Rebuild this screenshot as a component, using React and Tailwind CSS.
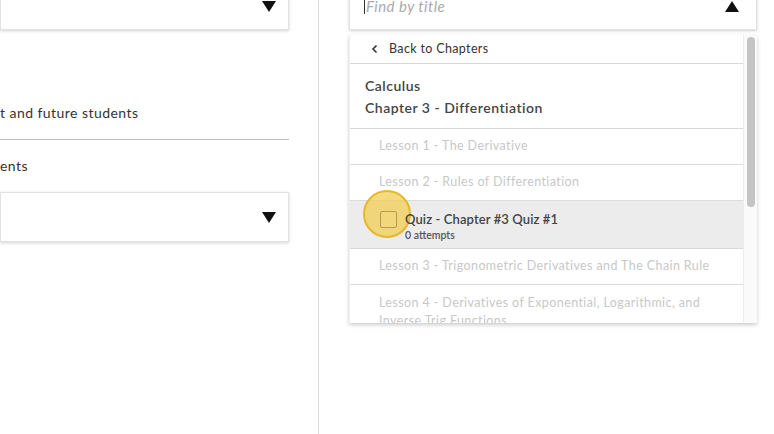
import React from "react";

const lessons = {
  before: ["Lesson 1 - The Derivative", "Lesson 2 - Rules of Differentiation"],
  after: ["Lesson 3 - Trigonometric Derivatives and The Chain Rule"],
};

function Triangle({ up }) {
  return (
    <svg width="14" height="11" viewBox="0 0 14 11" className="shrink-0">
      {up ? <path d="M0 11 L7 0 L14 11 Z" fill="#111" /> : <path d="M0 0 L14 0 L7 11 Z" fill="#111" />}
    </svg>
  );
}

function LessonRow({ title }) {
  return (
    <div className="h-[36px] shrink-0 flex items-center pl-[29px] border-b border-[#dcdcdc] text-[12.5px] tracking-[0.4px] text-[#c8c8c8]">
      {title}
    </div>
  );
}

export default function App() {
  return (
    <div
      className="w-[774px] h-[434px] overflow-hidden bg-white flex text-[#333]"
      style={{ fontFamily: "Lato, 'Noto Sans', sans-serif" }}
    >
      {/* Left settings column */}
      <div className="w-[319px] shrink-0 border-r border-[#dedede] pr-[29px] flex flex-col">
        <div className="-mt-[18px] h-[48px] shrink-0 bg-white border border-[#e2e2e2] shadow-[0_1px_3px_rgba(0,0,0,0.18)] flex items-center justify-end pr-[12px]">
          <Triangle />
        </div>
        <div className="mt-[70px] h-[40px] shrink-0 border-b border-[#bdbdbd] text-[14px] tracking-[0.45px] leading-[26px]">
          t and future students
        </div>
        <div className="h-[52px] shrink-0 flex items-center text-[14px] tracking-[0.45px] pb-[1px]">ents</div>
        <div className="h-[50px] shrink-0 bg-white border border-[#e2e2e2] shadow-[0_1px_3px_rgba(0,0,0,0.18)] flex items-center justify-end pr-[12px]">
          <Triangle />
        </div>
      </div>

      {/* Right picker column */}
      <div className="w-[438px] shrink-0 pl-[30px] flex flex-col">
        <div className="-mt-[18px] h-[48px] shrink-0 bg-white border border-[#e2e2e2] shadow-[0_1px_3px_rgba(0,0,0,0.18)] flex items-center justify-between pl-[14px] pr-[17px]">
          <div className="flex items-center">
            <span className="w-px h-[16px] bg-[#333]" />
            <span className="italic text-[15px] tracking-[0.45px] text-[#aaa] ml-px">Find by title</span>
          </div>
          <Triangle up />
        </div>

        <div className="mt-[5px] h-[288px] shrink-0 bg-white border-l border-[#eeeeee] shadow-[0_2px_4px_rgba(0,0,0,0.2)] flex overflow-hidden">
          <div className="flex-1 flex flex-col">
            <div className="h-[29px] flex items-center pl-[20px] border-b border-[#d8d8d8] text-[12.5px] tracking-[0.35px] text-[#333] shrink-0">
              <svg width="10" height="10" viewBox="0 0 10 10" className="mr-[9px]">
                <path d="M6.5 1.5 L3 5 L6.5 8.5" fill="none" stroke="#333" strokeWidth="1.6" />
              </svg>
              Back to Chapters
            </div>
            <div className="h-[65px] flex flex-col justify-center pl-[15px] pt-[2px] border-b border-[#d8d8d8] text-[14px] tracking-[0.5px] leading-[22px] font-semibold text-[#444] shrink-0">
              <span>Calculus</span>
              <span>Chapter 3 - Differentiation</span>
            </div>
            {lessons.before.map((t) => (
              <LessonRow key={t} title={t} />
            ))}
            <div className="relative h-[48px] shrink-0 bg-[#ececec] border-b border-[#d8d8d8] flex items-center pl-[30px]">
              <div className="absolute left-[13px] top-[-11px] w-[48px] h-[48px] rounded-full bg-[#f2cd55]/75 border-2 border-[#e6b829]" />
              <div className="relative w-[17px] h-[17px] border-[1.5px] border-[#b59a55] rounded-[2px] bg-[#f3d77c] -mt-[10px]" />
              <div className="relative ml-[8px] flex flex-col pt-[3px]">
                <span className="text-[13px] font-semibold tracking-[0.1px] text-[#444] leading-[17px]">Quiz - Chapter #3 Quiz #1</span>
                <span className="text-[10.5px] font-semibold text-[#555] leading-[14px]">0 attempts</span>
              </div>
            </div>
            {lessons.after.map((t) => (
              <LessonRow key={t} title={t} />
            ))}
            <div className="pl-[29px] pt-[9px] text-[12.5px] tracking-[0.4px] leading-[18px] text-[#c8c8c8]">
              Lesson 4 - Derivatives of Exponential, Logarithmic, and
              <br />
              Inverse Trig Functions
            </div>
          </div>
          <div className="w-[14px] shrink-0 bg-[#fafafa] border-l border-[#ececec] pt-[2px] flex justify-center">
            <div className="w-[8px] h-[170px] rounded-full bg-[#c4c4c4]" />
          </div>
        </div>
      </div>
    </div>
  );
}
